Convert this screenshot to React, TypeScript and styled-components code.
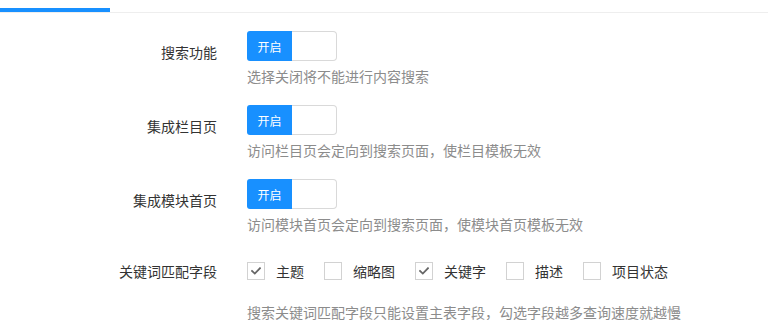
import React from "react";
import styled, { createGlobalStyle } from "styled-components";

const GlobalStyle = createGlobalStyle`
  html, body {
    margin: 0;
    padding: 0;
    background: #ffffff;
  }
  body {
    font-family: "Noto Sans CJK SC", "Noto Sans", sans-serif;
    font-size: 14px;
    color: #333333;
  }
`;

const BLUE = "#1890ff";

const TabBar = styled.div`
  display: flex;
  border-bottom: 1px solid #eeeeee;
`;

const TabItem = styled.div<{ $active?: boolean }>`
  width: 110px;
  height: 8px;
  border-bottom: 4px solid ${(p) => (p.$active ? BLUE : "transparent")};
`;

const Form = styled.div`
  padding-top: 18px;
  display: flex;
  flex-direction: column;
  gap: 19px;
`;

const Row = styled.div`
  display: flex;
  align-items: flex-start;
`;

const Label = styled.div<{ $top: number }>`
  width: 217px;
  flex: none;
  box-sizing: border-box;
  text-align: right;
  line-height: 20px;
  padding-top: ${(p) => p.$top}px;
  color: #333333;
  white-space: nowrap;
`;

const Control = styled.div`
  margin-left: 30px;
  display: flex;
  flex-direction: column;
`;

const Switch = styled.div`
  display: flex;
  width: 90px;
  height: 30px;
  cursor: pointer;
`;

const SwitchOn = styled.div`
  width: 45px;
  height: 30px;
  background: ${BLUE};
  border-radius: 3px 0 0 3px;
  color: #ffffff;
  font-size: 12px;
  display: flex;
  align-items: center;
  justify-content: center;
`;

const SwitchOff = styled.div`
  flex: 1;
  box-sizing: border-box;
  height: 30px;
  border: 1px solid #d9d9d9;
  border-left: none;
  border-radius: 0 4px 4px 0;
  background: #ffffff;
`;

const Help = styled.div<{ $top: number; $lh?: number }>`
  margin-top: ${(p) => p.$top}px;
  line-height: ${(p) => p.$lh ?? 20}px;
  color: #8c8c8c;
  white-space: nowrap;
`;

const CheckGroup = styled.div`
  display: flex;
  align-items: center;
  height: 36px;
`;

const CheckItem = styled.label`
  display: flex;
  align-items: center;
  margin-right: 20px;
  cursor: pointer;
  color: #333333;
`;

const Box = styled.span`
  width: 18px;
  height: 18px;
  box-sizing: border-box;
  border: 1px solid #d2d2d2;
  background: #ffffff;
  display: flex;
  align-items: center;
  justify-content: center;
  margin-right: 11px;
`;

const CheckText = styled.span`
  line-height: 20px;
  white-space: nowrap;
`;

const Tick = () => (
  <svg width="10" height="8" viewBox="0 0 10 8" fill="none">
    <polyline
      points="1,4 3.8,6.6 9,1.2"
      stroke="#666666"
      strokeWidth="1.8"
      strokeLinecap="square"
      strokeLinejoin="miter"
    />
  </svg>
);

const switchRows = [
  { label: "搜索功能", help: "选择关闭将不能进行内容搜索" },
  { label: "集成栏目页", help: "访问栏目页会定向到搜索页面，使栏目模板无效" },
  { label: "集成模块首页", help: "访问模块首页会定向到搜索页面，使模块首页模板无效" },
];

const fields = [
  { name: "主题", checked: true },
  { name: "缩略图", checked: false },
  { name: "关键字", checked: true },
  { name: "描述", checked: false },
  { name: "项目状态", checked: false },
];

export default function App() {
  return (
    <>
      <GlobalStyle />
      <TabBar>
        <TabItem $active />
      </TabBar>
      <Form>
        {switchRows.map((r) => (
          <Row key={r.label}>
            <Label $top={11}>{r.label}</Label>
            <Control>
              <Switch>
                <SwitchOn>开启</SwitchOn>
                <SwitchOff />
              </Switch>
              <Help $top={5}>{r.help}</Help>
            </Control>
          </Row>
        ))}
        <Row>
          <Label $top={8}>关键词匹配字段</Label>
          <Control>
            <CheckGroup>
              {fields.map((f) => (
                <CheckItem key={f.name}>
                  <Box>{f.checked && <Tick />}</Box>
                  <CheckText>{f.name}</CheckText>
                </CheckItem>
              ))}
            </CheckGroup>
            <Help $top={15} $lh={16}>
              搜索关键词匹配字段只能设置主表字段，勾选字段越多查询速度就越慢
            </Help>
          </Control>
        </Row>
      </Form>
    </>
  );
}
